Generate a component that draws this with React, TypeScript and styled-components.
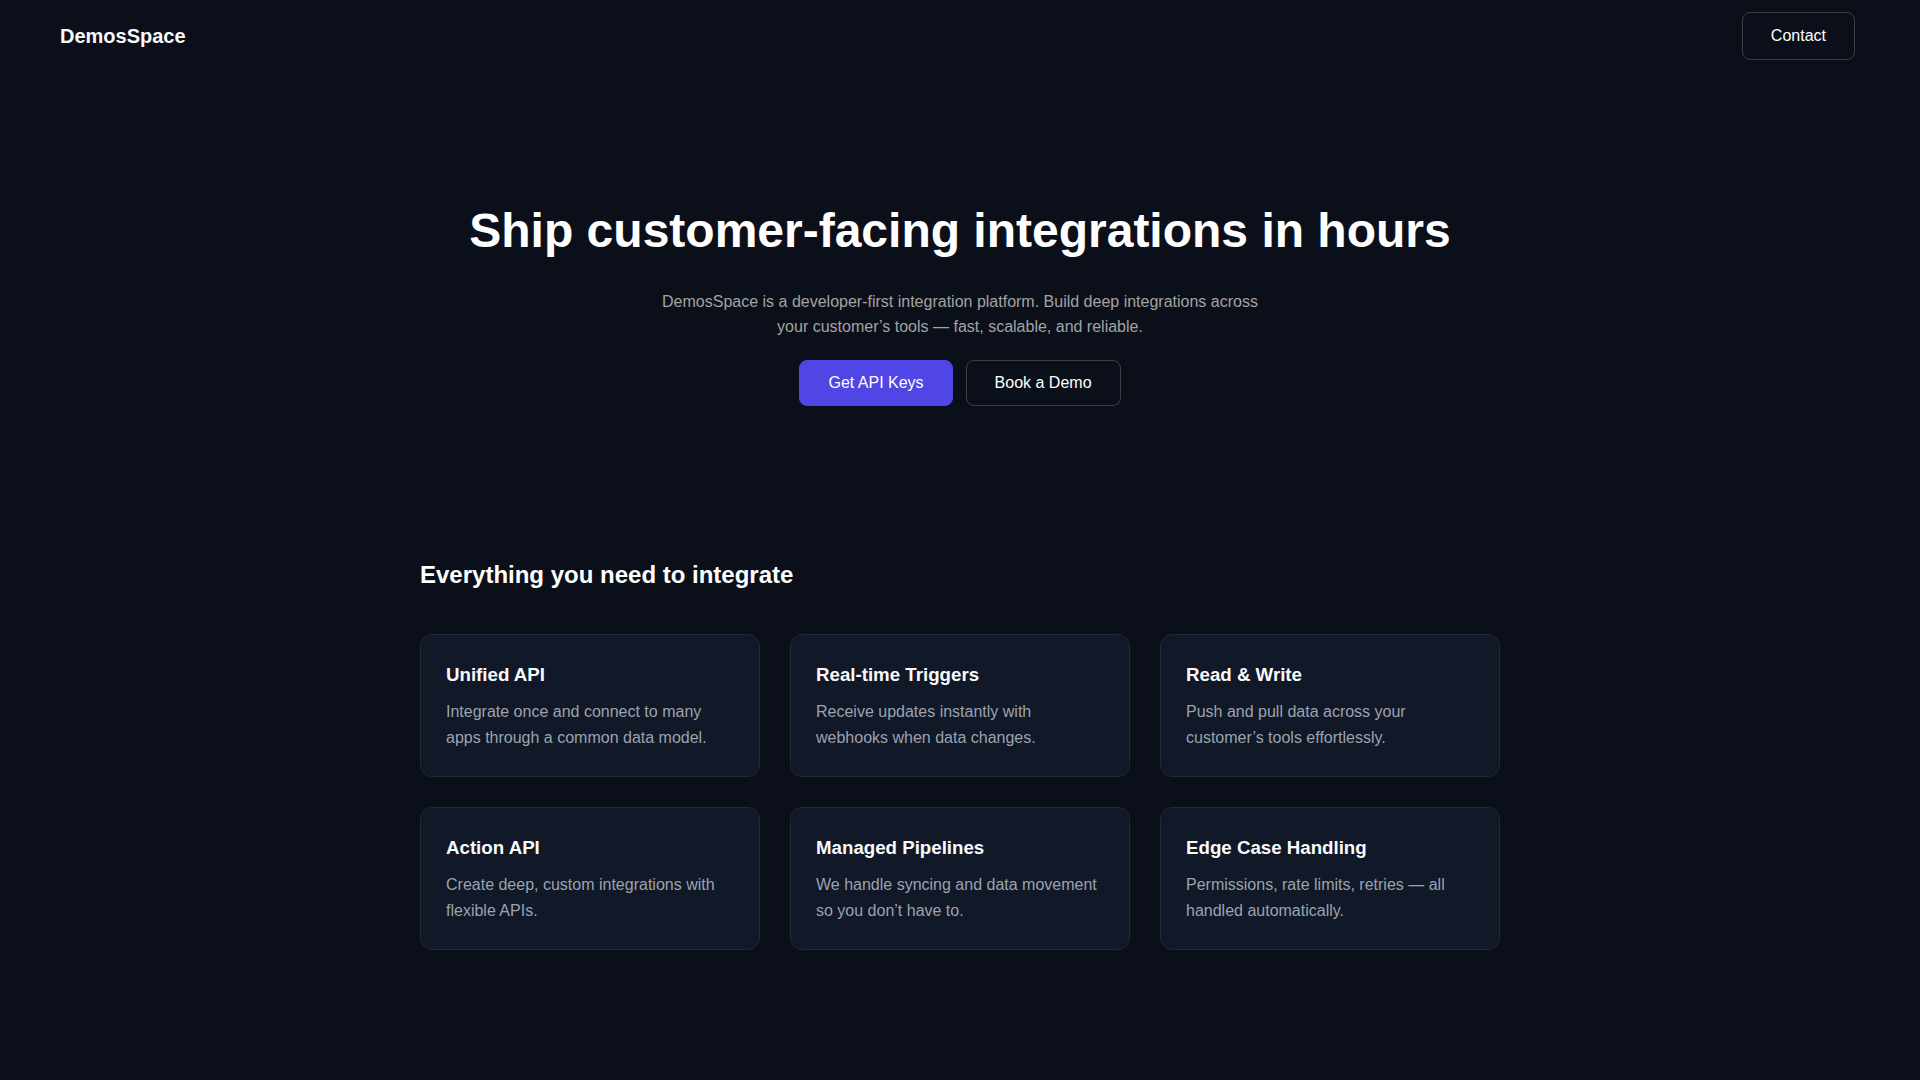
import React from 'react';
import styled, { createGlobalStyle } from 'styled-components';

const GlobalStyle = createGlobalStyle`
  * {
    box-sizing: border-box;
  }

  body {
    margin: 0;
    background-color: #0b0f19;
    color: #f9fafb;
    font-family: "Liberation Sans", Arial, sans-serif;
    line-height: 1.6;
  }
`;

const Page = styled.div`
  min-height: 100vh;
  background-color: #0b0f19;
`;

const Header = styled.header`
  display: flex;
  justify-content: space-between;
  align-items: center;
  padding: 12px 65px 12px 60px;
`;

const Logo = styled.div`
  font-size: 20px;
  font-weight: 700;
  color: #f9fafb;
  line-height: 1.2;
`;

const Button = styled.button<{ $primary?: boolean }>`
  font-family: inherit;
  font-size: 16px;
  line-height: normal;
  padding: 13px 28px;
  border-radius: 8px;
  cursor: pointer;
  color: #ffffff;
  background-color: ${props => (props.$primary ? '#4f46e5' : 'transparent')};
  border: 1px solid ${props => (props.$primary ? '#4f46e5' : 'rgba(255, 255, 255, 0.2)')};

  &:hover {
    background-color: ${props => (props.$primary ? '#4338ca' : 'rgba(255, 255, 255, 0.05)')};
  }
`;

const ContactButton = styled(Button)`
  padding: 14px 28px;
`;

const Hero = styled.section`
  display: flex;
  flex-direction: column;
  align-items: center;
  text-align: center;
  padding: 130px 24px 0;
`;

const HeroTitle = styled.h1`
  margin: 0 0 29px;
  font-size: 48px;
  font-weight: 700;
  line-height: 1.2;
  color: #ffffff;
`;

const HeroText = styled.p`
  margin: 0 0 20px;
  max-width: 600px;
  font-size: 16px;
  color: #a3a3a3;
`;

const Actions = styled.div`
  display: flex;
  gap: 13px;
`;

const Features = styled.section`
  max-width: 1080px;
  margin: 0 auto;
  padding: 150px 0 80px;
`;

const SectionTitle = styled.h2`
  margin: 0 0 40px;
  font-size: 24px;
  font-weight: 700;
  color: #ffffff;
`;

const Grid = styled.div`
  display: grid;
  grid-template-columns: repeat(3, 1fr);
  gap: 30px;
`;

const Card = styled.div`
  background-color: #111827;
  border: 1px solid #1f2937;
  border-radius: 12px;
  padding: 25px 25px 26px;
`;

const CardTitle = styled.h3`
  margin: 0 0 9px;
  font-size: 18.7px;
  font-weight: 700;
  color: #f9fafb;
`;

const CardText = styled.p`
  margin: 0;
  font-size: 16px;
  color: #9ca3af;
`;

const features = [
  {
    title: 'Unified API',
    text: 'Integrate once and connect to many apps through a common data model.',
  },
  {
    title: 'Real-time Triggers',
    text: 'Receive updates instantly with webhooks when data changes.',
  },
  {
    title: 'Read & Write',
    text: 'Push and pull data across your customer’s tools effortlessly.',
  },
  {
    title: 'Action API',
    text: 'Create deep, custom integrations with flexible APIs.',
  },
  {
    title: 'Managed Pipelines',
    text: 'We handle syncing and data movement so you don’t have to.',
  },
  {
    title: 'Edge Case Handling',
    text: 'Permissions, rate limits, retries — all handled automatically.',
  },
];

const App: React.FC = () => {
  return (
    <Page>
      <GlobalStyle />
      <Header>
        <Logo>DemosSpace</Logo>
        <ContactButton>Contact</ContactButton>
      </Header>

      <Hero>
        <HeroTitle>Ship customer-facing integrations in hours</HeroTitle>
        <HeroText>
          DemosSpace is a developer-first integration platform. Build deep integrations across
          your customer’s tools — fast, scalable, and reliable.
        </HeroText>
        <Actions>
          <Button $primary>Get API Keys</Button>
          <Button>Book a Demo</Button>
        </Actions>
      </Hero>

      <Features>
        <SectionTitle>Everything you need to integrate</SectionTitle>
        <Grid>
          {features.map(feature => (
            <Card key={feature.title}>
              <CardTitle>{feature.title}</CardTitle>
              <CardText>{feature.text}</CardText>
            </Card>
          ))}
        </Grid>
      </Features>
    </Page>
  );
};

export default App;
